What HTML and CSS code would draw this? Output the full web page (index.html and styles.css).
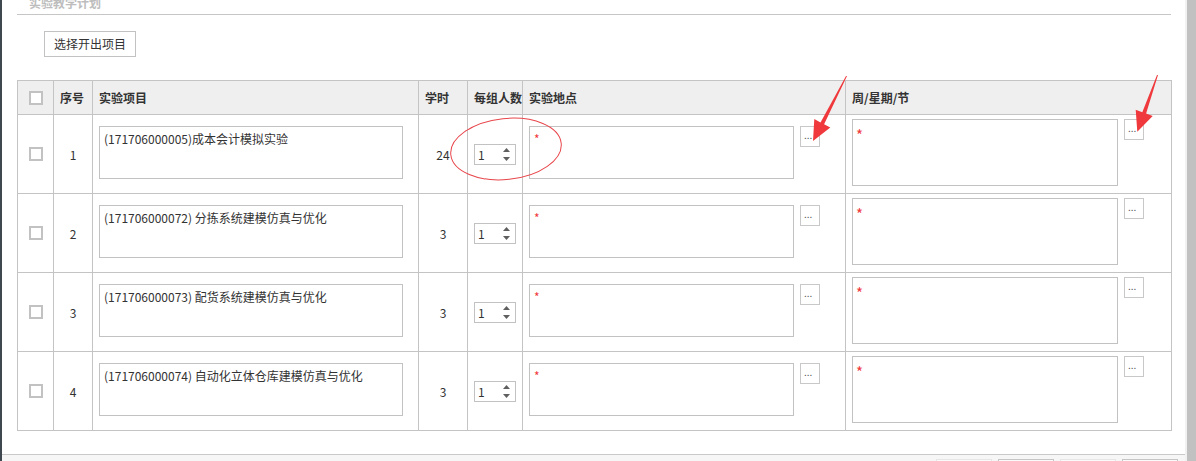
FILE: index.html
```html
<!DOCTYPE html>
<html lang="zh-CN">
<head>
<meta charset="utf-8">
<title>实验教学计划</title>
<link rel="stylesheet" href="styles.css">
</head>
<body>
<div class="frame">
  <div class="edge"></div>
  <div class="main">
    <div class="content">
      <div class="section-title">实验教学计划</div>
      <div class="toolbar"><button class="btn" type="button">选择开出项目</button></div>
      <table class="grid">
        <colgroup>
          <col class="c-cb"><col class="c-idx"><col class="c-proj"><col class="c-hrs"><col class="c-num"><col class="c-loc"><col class="c-week">
        </colgroup>
        <thead>
          <tr>
            <th class="center"><span class="cb"></span></th>
            <th>序号</th>
            <th>实验项目</th>
            <th>学时</th>
            <th class="tight">每组人数</th>
            <th>实验地点</th>
            <th>周/星期/节</th>
          </tr>
        </thead>
        <tbody>
          <tr>
            <td class="center"><span class="cb"></span></td>
            <td class="center">1</td>
            <td><div class="field"><textarea class="ta proj">(171706000005)成本会计模拟实验</textarea></div></td>
            <td class="center">24</td>
            <td class="nocell"><div class="num"><span>1</span><svg class="spin" width="7" height="13" viewBox="0 0 7 13"><path d="M3.5 0 L7 4 L0 4 Z M0 9 L7 9 L3.5 13 Z" fill="#5f5f5f"/></svg></div></td>
            <td><div class="field"><textarea class="ta loc" placeholder="*"></textarea><span class="pick">...</span></div></td>
            <td><div class="field"><textarea class="ta week" placeholder="*"></textarea><span class="pick">...</span></div></td>
          </tr>
          <tr>
            <td class="center"><span class="cb"></span></td>
            <td class="center">2</td>
            <td><div class="field"><textarea class="ta proj">(171706000072) 分拣系统建模仿真与优化</textarea></div></td>
            <td class="center">3</td>
            <td class="nocell"><div class="num"><span>1</span><svg class="spin" width="7" height="13" viewBox="0 0 7 13"><path d="M3.5 0 L7 4 L0 4 Z M0 9 L7 9 L3.5 13 Z" fill="#5f5f5f"/></svg></div></td>
            <td><div class="field"><textarea class="ta loc" placeholder="*"></textarea><span class="pick">...</span></div></td>
            <td><div class="field"><textarea class="ta week" placeholder="*"></textarea><span class="pick">...</span></div></td>
          </tr>
          <tr>
            <td class="center"><span class="cb"></span></td>
            <td class="center">3</td>
            <td><div class="field"><textarea class="ta proj">(171706000073) 配货系统建模仿真与优化</textarea></div></td>
            <td class="center">3</td>
            <td class="nocell"><div class="num"><span>1</span><svg class="spin" width="7" height="13" viewBox="0 0 7 13"><path d="M3.5 0 L7 4 L0 4 Z M0 9 L7 9 L3.5 13 Z" fill="#5f5f5f"/></svg></div></td>
            <td><div class="field"><textarea class="ta loc" placeholder="*"></textarea><span class="pick">...</span></div></td>
            <td><div class="field"><textarea class="ta week" placeholder="*"></textarea><span class="pick">...</span></div></td>
          </tr>
          <tr>
            <td class="center"><span class="cb"></span></td>
            <td class="center">4</td>
            <td><div class="field"><textarea class="ta proj">(171706000074) 自动化立体仓库建模仿真与优化</textarea></div></td>
            <td class="center">3</td>
            <td class="nocell"><div class="num"><span>1</span><svg class="spin" width="7" height="13" viewBox="0 0 7 13"><path d="M3.5 0 L7 4 L0 4 Z M0 9 L7 9 L3.5 13 Z" fill="#5f5f5f"/></svg></div></td>
            <td><div class="field"><textarea class="ta loc" placeholder="*"></textarea><span class="pick">...</span></div></td>
            <td><div class="field"><textarea class="ta week" placeholder="*"></textarea><span class="pick">...</span></div></td>
          </tr>
        </tbody>
      </table>
    </div>
    <div class="footer">
      <span class="fbtn light"></span>
      <span class="fbtn"></span>
      <span class="fbtn light"></span>
      <span class="fbtn"></span>
    </div>
  </div>
  <div class="scrollbar"><div class="thumb"></div></div>
</div>
<svg class="annot" width="1196" height="461" viewBox="0 0 1196 461">
  <ellipse cx="506" cy="149" rx="55.5" ry="30.5" transform="rotate(-6 506 149)" fill="none" stroke="#e8454a" stroke-width="1"/>
  <polygon points="847,76 824.1,124.2 830.3,127.5 813,141 814.3,119.1 820.5,122.4 846,76" fill="#f0393c"/>
  <polygon points="1158,75 1146.1,113.6 1152.7,116 1137.3,131.7 1135.7,109.8 1142.3,112.2 1157,75" fill="#f0393c"/>
</svg>
</body>
</html>
```
FILE: styles.css
```css
* { box-sizing: border-box; }
html, body { margin: 0; padding: 0; }
body {
  width: 1196px;
  height: 461px;
  overflow: hidden;
  position: relative;
  background: #fff;
  color: #333;
  font-family: "Noto Sans CJK SC", "Microsoft YaHei", sans-serif;
  font-size: 12px;
}
.frame { display: flex; height: 461px; }
.edge { width: 2px; flex: none; background: #3e484e; }
.main { flex: 1; min-width: 0; display: flex; flex-direction: column; }
.content { height: 454px; flex: none; padding: 0 14px 0 15px; overflow: hidden; }
.footer {
  flex: 1;
  border-top: 1px solid #c9c9c9;
  background: #f6f6f6;
  display: flex;
  justify-content: flex-end;
  gap: 6px;
  padding: 4px 7px 0 0;
}
.fbtn { width: 56px; height: 24px; border: 1px solid #c6c6c6; background: #fafafa; }
.fbtn.light { border-color: #e6e6e6; }
.scrollbar { width: 11px; flex: none; background: #f1f1f1; padding-left: 2px; }
.thumb { height: 100%; background: #c1c1c1; }

.section-title {
  margin-top: -7px;
  height: 22px;
  line-height: 20px;
  border-bottom: 1px solid #c6c6c6;
  padding-left: 12px;
  font-weight: bold;
  color: #bdbdbd;
}
.toolbar { padding: 16px 0 0 27px; }
.btn {
  height: 26px;
  padding: 0 9px;
  border: 1px solid #c2c2c2;
  background: #fff;
  color: #333;
  font: inherit;
  line-height: 24px;
}

.grid {
  margin-top: 23px;
  width: 1154px;
  border-collapse: collapse;
  table-layout: fixed;
}
.c-cb { width: 36px; }
.c-idx { width: 39px; }
.c-proj { width: 326px; }
.c-hrs { width: 49px; }
.c-num { width: 55px; }
.c-loc { width: 323px; }
.c-week { width: 326px; }
.grid th, .grid td {
  border: 1px solid #c4c4c4;
  padding: 0 6px;
}
.grid th {
  height: 34px;
  background: #efefef;
  text-align: left;
  font-weight: bold;
  white-space: nowrap;
}
.grid td { height: 79px; vertical-align: middle; }
.grid .center { text-align: center; padding: 0; }
.grid .tight { padding: 0 0 0 6px; }
.grid .nocell { padding: 0; }

.cb {
  display: block;
  width: 14px;
  height: 14px;
  margin: 0 auto;
  border: 2px solid #c2c2c2;
  background: #fff;
}

.field { display: flex; align-items: flex-start; gap: 6px; padding-bottom: 4px; }
.ta {
  display: block;
  margin: 0;
  border: 1px solid #c2c2c2;
  padding: 3px 4px;
  font: inherit;
  color: #333;
  background: #fff;
  resize: none;
  overflow: hidden;
  outline: none;
}
.ta::placeholder { color: #f0393c; opacity: 1; }
.proj { width: 304px; height: 53px; }
.loc { width: 265px; height: 53px; }
.week { width: 266px; height: 67px; font-size: 15px; padding: 4px 3px; }

.pick {
  flex: none;
  width: 20px;
  height: 21px;
  border: 1px solid #c8c8c8;
  background: #fff;
  color: #555;
  font-size: 10px;
  line-height: 1;
  display: flex;
  align-items: flex-end;
  padding: 0 0 6px 3px;
}

.num {
  width: 42px;
  height: 21px;
  margin: 0 auto;
  border: 1px solid #c2c2c2;
  display: flex;
  align-items: center;
  padding: 0 5px 0 3px;
  font-size: 12px;
  color: #333;
}
.spin { margin-left: auto; display: block; }

.annot { position: absolute; left: 0; top: 0; pointer-events: none; }
```
